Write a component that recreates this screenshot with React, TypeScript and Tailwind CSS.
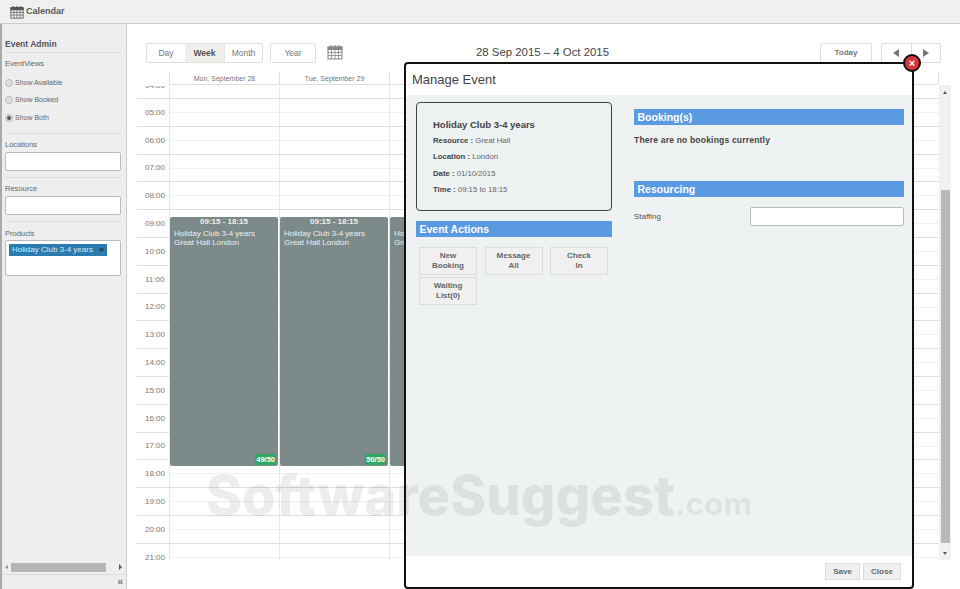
import { ReactNode } from "react";

const hours = ["05:00", "06:00", "07:00", "08:00", "09:00", "10:00", "11:00", "12:00", "13:00", "14:00", "15:00", "16:00", "17:00", "18:00", "19:00", "20:00", "21:00"];

const days = [
  { name: "Mon, September 28", booked: "49/50" },
  { name: "Tue, September 29", booked: "50/50" },
  { name: "Wed, September 30", booked: "50/50" },
  { name: "Thu, October 1", booked: "" },
  { name: "Fri, October 2", booked: "" },
  { name: "Sat, October 3", booked: "" },
  { name: "Sun, October 4", booked: "" },
];

function CalendarGlyph({ className, stroke = "#555" }: { className: string; stroke?: string }) {
  return (
    <svg viewBox="0 0 16 16" className={className} fill="none" stroke={stroke} strokeWidth="1">
      <rect x="1" y="3" width="14" height="12" fill="#fafafa" />
      <path d="M1 3h14v2.5H1z" fill={stroke} />
      <path d="M1 8.5h14M1 11.5h14M4.5 5.5V15M8 5.5V15M11.5 5.5V15" strokeWidth="0.8" />
      <path d="M4 1v3M8 1v3M12 1v3" strokeWidth="1.2" />
    </svg>
  );
}

function SideLabel({ children }: { children: ReactNode }) {
  return <div className="text-[7.5px] leading-[10px] text-[#666]">{children}</div>;
}

function Radio({ label, checked }: { label: string; checked?: boolean }) {
  return (
    <div className="flex h-[17.5px] items-center gap-[2px]">
      <span className="flex h-[8px] w-[8px] items-center justify-center rounded-full border border-[#bbb] bg-[#e0e0e0]">
        {checked && <span className="h-[4px] w-[4px] rounded-full bg-[#555]" />}
      </span>
      <span className="text-[7px] text-[#666]">{label}</span>
    </div>
  );
}

function Band({ children }: { children: ReactNode }) {
  return <div className="flex h-4 items-center bg-[#5a9ae0] pt-[1px] pl-[3.5px] text-[10.5px] font-bold text-white">{children}</div>;
}

function ActionButton({ lines }: { lines: string[] }) {
  return (
    <div className="flex h-7 w-[58px] flex-col items-center justify-center border border-[#ddd] bg-[#f0f0f0] text-[8px] leading-[10px] font-bold text-[#666]">
      {lines.map((l) => (
        <span key={l}>{l}</span>
      ))}
    </div>
  );
}

function InfoRow({ label, value }: { label: string; value: string }) {
  return (
    <div className="mt-[6.5px] h-[10px] text-[7.75px] leading-[10px] text-[#666]">
      <span className="font-bold text-[#444]">{label} : </span>
      {value}
    </div>
  );
}

function Sidebar() {
  return (
    <aside className="flex w-[127px] shrink-0 flex-col border-r border-l-2 border-r-[#ccc] border-l-[#aaa] bg-[#eeeeee]">
      <div className="flex-1 pt-[15px] pr-[5px] pl-[3px]">
        <div className="border-b border-[#ddd] pb-[3px] text-[8.5px] leading-[10px] font-bold text-[#555]">Event Admin</div>
        <div className="mt-[6px]">
          <SideLabel>EventViews</SideLabel>
        </div>
        <div className="mt-[5px] border-b border-[#ddd] pb-[6px]">
          <Radio label="Show Available" />
          <Radio label="Show Booked" />
          <Radio label="Show Both" checked />
        </div>
        <div className="mt-[6px]">
          <SideLabel>Locations</SideLabel>
        </div>
        <div className="mt-[2px] h-[19px] rounded-[2px] border border-[#bbb] bg-white" />
        <div className="mt-[6px] border-t border-[#ddd] pt-[6px]">
          <SideLabel>Resource</SideLabel>
        </div>
        <div className="mt-[2px] h-[19px] rounded-[2px] border border-[#bbb] bg-white" />
        <div className="mt-[6px] border-t border-[#ddd] pt-[7px]">
          <SideLabel>Products</SideLabel>
        </div>
        <div className="mt-[1px] h-[36px] rounded-[2px] border border-[#bbb] bg-white p-[3px]">
          <div className="flex h-3 w-[98px] items-center justify-between bg-[#2a7cb0] px-[3px] text-[8px] whitespace-nowrap text-[#dbe9f2]">
            <span>Holiday Club 3-4 years</span>
            <span className="text-[8px] font-bold text-[#222]">×</span>
          </div>
        </div>
      </div>
      <div className="mb-[1px] flex h-[12px] items-center justify-between pr-[4px] pl-[3px]">
        <span className="h-0 w-0 border-y-[2px] border-r-[3px] border-y-transparent border-r-[#999]" />
        <div className="mr-[13px] ml-[3px] h-[9px] flex-1 bg-[#b5b5b5]" />
        <span className="h-0 w-0 border-y-[3px] border-l-[3px] border-y-transparent border-l-[#555]" />
      </div>
      <div className="flex h-[15px] items-center justify-end border-t border-[#ddd] pr-[3px] text-[10px] leading-none font-bold text-[#777]">«</div>
    </aside>
  );
}

function DayColumn({ booked }: { booked: string }) {
  return (
    <div className="relative w-[110px] shrink-0 border-l border-[#e6e6e6]">
      <div className="h-[13px] border-b border-[#ddd]" />
      {hours.map((h) => (
        <div key={h} className="h-[27.8px] border-b border-[#ddd]">
          <div className="h-[14px] border-b border-[#f0f0f0]" />
        </div>
      ))}
      {booked && (
        <div className="absolute top-[131px] right-[1px] left-0 h-[249px] rounded-[2px] bg-[#7d8a8a] text-[8px] leading-[9px] text-[#edf0f0]">
          <div className="text-center leading-[9px] font-bold">09:15 - 18:15</div>
          <div className="mt-[3px] pl-1 whitespace-nowrap">Holiday Club 3-4 years</div>
          <div className="pl-1 whitespace-nowrap">Great Hall London</div>
          <div className="absolute right-[2px] bottom-[1px] rounded-[2px] bg-[#2eaa66] px-[1px] py-[1px] text-[7.5px] leading-[9px] font-bold text-white">{booked}</div>
        </div>
      )}
    </div>
  );
}

function CalendarPanel() {
  return (
    <main className="flex-1 pt-[19px] pl-[10px]">
      <div className="flex h-5 items-stretch pl-[9px] text-[8px] font-bold text-[#777]">
        <div className="flex w-[117px] overflow-hidden rounded-[2px] border border-[#ddd] text-[8.5px] font-normal">
          <div className="flex w-[38px] items-center justify-center">Day</div>
          <div className="flex w-[39px] items-center justify-center bg-[#f0eeea] font-bold text-[#555]">Week</div>
          <div className="flex flex-1 items-center justify-center border-l border-[#e6e6e6]">Month</div>
        </div>
        <div className="ml-[7px] flex w-[46px] items-center justify-center rounded-[2px] border border-[#ddd] text-[8.5px] font-normal">Year</div>
        <CalendarGlyph className="mt-[1px] ml-[11px] h-[16px] w-[16px]" stroke="#888" />
        <div className="flex w-[266px] items-center justify-end text-[11.4px] leading-none font-normal text-[#444]">28 Sep 2015 – 4 Oct 2015</div>
        <div className="ml-[211px] flex w-[52px] items-center justify-center rounded-[2px] border border-[#ddd]">Today</div>
        <div className="ml-[9px] flex w-[60px] rounded-[2px] border border-[#ddd]">
          <div className="flex flex-1 items-center justify-center border-r border-[#ddd]">
            <span className="h-0 w-0 border-y-[4px] border-r-[6px] border-y-transparent border-r-[#777]" />
          </div>
          <div className="flex flex-1 items-center justify-center">
            <span className="h-0 w-0 border-y-[4px] border-l-[6px] border-y-transparent border-l-[#777]" />
          </div>
        </div>
      </div>

      <div className="mt-[9px] ml-[32px] flex h-[13px] w-[770px] border-r border-b border-[#ddd] text-[7px] leading-[12px] text-[#777]">
        {days.map((d) => (
          <div key={d.name} className="w-[110px] shrink-0 border-l border-[#ddd] pt-[1px] text-center">
            {d.name}
          </div>
        ))}
      </div>

      <div className="flex h-[475px] items-start">
        <div className="h-full w-[802px] overflow-hidden">
          <div className="mt-[1px] flex">
            <div className="w-[32px] shrink-0 text-[8px] text-[#777]">
              <div className="h-[13px] overflow-hidden border-b border-[#ddd] pl-[8px]">
                <span className="block -translate-y-[5px] leading-[10px]">04:00</span>
              </div>
              {hours.map((h) => (
                <div key={h} className="flex h-[27.8px] items-center border-b border-[#ddd] pt-[1px] pl-[8px]">
                  {h}
                </div>
              ))}
            </div>
            {days.map((d) => (
              <DayColumn key={d.name} booked={d.booked} />
            ))}
          </div>
        </div>
        <div className="flex h-full w-[12px] flex-col items-center bg-[#f1f1f1]">
          <span className="mt-[6px] h-0 w-0 border-x-[2px] border-b-[3px] border-x-transparent border-b-[#555]" />
          <div className="mt-[96px] h-[353px] w-[9px] bg-[#b8b8b8]" />
          <span className="mt-[9px] h-0 w-0 border-x-[2px] border-t-[3px] border-x-transparent border-t-[#555]" />
        </div>
      </div>
    </main>
  );
}

function ManageEvent() {
  return (
    <div className="absolute top-[62px] left-[404px] flex h-[527px] w-[510px] flex-col rounded-[4px] border-2 border-[#111] bg-white">
      <button className="absolute -top-[10px] -right-[9px] flex h-[18px] w-[18px] items-center justify-center rounded-full border-2 border-[#111] bg-[#d5383c] text-[11px] leading-none font-bold text-white">
        ×
      </button>
      <div className="flex h-[31px] shrink-0 items-center pl-[6px] text-[13px] text-[#444]">Manage Event</div>
      <div className="flex flex-1 gap-[22px] bg-[#eef2f3] pt-[7px] pr-2 pl-[10px]">
        <div className="w-[196px]">
          <div className="h-[109px] rounded-[4px] border border-[#444] pt-[16px] pl-4">
            <div className="-mb-[2px] text-[9.5px] leading-3 font-bold text-[#444]">Holiday Club 3-4 years</div>
            <InfoRow label="Resource" value="Great Hall" />
            <InfoRow label="Location" value="London" />
            <InfoRow label="Date" value="01/10/2015" />
            <InfoRow label="Time" value="09:15 to 18:15" />
          </div>
          <div className="mt-[10px]">
            <Band>Event Actions</Band>
          </div>
          <div className="mt-[10px] flex flex-wrap gap-x-[7.5px] gap-y-[2px] pl-[3px]">
            <ActionButton lines={["New", "Booking"]} />
            <ActionButton lines={["Message", "All"]} />
            <ActionButton lines={["Check", "In"]} />
            <ActionButton lines={["Waiting", "List(0)"]} />
          </div>
        </div>
        <div className="mt-[7px] flex-1">
          <Band>Booking(s)</Band>
          <div className="mt-[10px] text-[8.5px] leading-[10px] font-bold tracking-[0.2px] text-[#444]">There are no bookings currently</div>
          <div className="mt-[36px]">
            <Band>Resourcing</Band>
          </div>
          <div className="mt-[10px] flex items-center justify-between">
            <span className="text-[8px] text-[#555]">Staffing</span>
            <div className="h-[19px] w-[154px] rounded-[2px] border border-[#bbb] bg-white" />
          </div>
        </div>
      </div>
      <div className="flex h-[31px] shrink-0 items-center justify-end gap-[3px] pr-[11px] text-[8px] font-bold text-[#666]">
        <div className="flex h-[17px] w-[35px] items-center justify-center border border-[#ddd] bg-[#f0f0f0]">Save</div>
        <div className="flex h-[17px] w-[38px] items-center justify-center border border-[#ddd] bg-[#f0f0f0]">Close</div>
      </div>
    </div>
  );
}

export default function App() {
  return (
    <div className="relative h-[589px] w-[960px] overflow-hidden bg-white font-['Liberation_Sans',Arial,sans-serif]">
      <header className="flex h-6 items-center gap-[2px] border-b border-[#ccc] bg-[#f0f0f0] pl-[10px] text-[9px] font-bold text-[#555]">
        <CalendarGlyph className="h-[14px] w-[14px]" />
        Calendar
      </header>
      <div className="flex h-[565px]">
        <Sidebar />
        <CalendarPanel />
      </div>
      <ManageEvent />
      <div className="pointer-events-none absolute top-[459px] left-[206px] font-['Inter',sans-serif] text-[54.4px] leading-[72px] font-extrabold whitespace-nowrap text-black/[0.07]">
        SoftwareSuggest<span className="text-[31.5px] font-bold">.com</span>
      </div>
    </div>
  );
}
